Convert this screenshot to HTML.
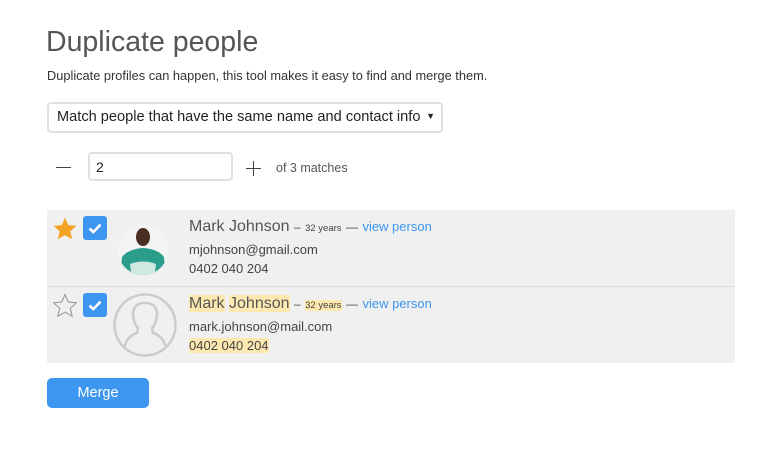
<!DOCTYPE html>
<html><head><meta charset="utf-8"><style>
*{margin:0;padding:0;box-sizing:border-box}
body{width:781px;height:457px;background:#fff;font-family:"Liberation Sans",sans-serif;color:#444;position:relative;overflow:hidden}
.a{position:absolute;white-space:nowrap}
.hl{background:#fde9b0}
.row{position:absolute;left:47px;width:688px;background:#f0f0f0}
.cb{position:absolute;width:24px;height:24px;border-radius:3px;background:#3d96f0}
.name{font-size:16px;color:#555}
.sm{font-size:9.5px;color:#444}
.link{color:#3d96f0;font-size:13px}
.t{font-size:13px;color:#444}
</style></head><body>
<div class="a" style="left:46px;top:26px;font-size:28.5px;color:#555">Duplicate people</div>
<div class="a" style="left:47px;top:68px;font-size:12.8px;color:#333">Duplicate profiles can happen, this tool makes it easy to find and merge them.</div>
<div class="a" style="left:47px;top:102px;width:396px;height:31px;border:2px solid #e0e0e0;border-radius:4px;font-size:14.6px;color:#222;padding:5px 0 0 8px">Match people that have the same name and contact info<span style="position:absolute;right:6px;top:7px;font-size:9px">▼</span></div>
<div class="a" style="left:56px;top:167px;width:15px;height:1px;background:#444"></div>
<div class="a" style="left:88px;top:152px;width:145px;height:29px;border:2px solid #e0e0e0;border-radius:4px;font-size:14px;color:#222;padding:5px 0 0 6px">2</div>
<div class="a" style="left:246px;top:168px;width:15px;height:1px;background:#444"></div>
<div class="a" style="left:253px;top:161px;width:1px;height:15px;background:#444"></div>
<div class="a" style="left:276px;top:161px;font-size:12.5px;color:#555">of 3 matches</div>

<div class="row" style="top:210px;height:76px"></div>
<div class="a" style="left:47px;top:286px;width:688px;height:1px;background:#ddd"></div>
<div class="row" style="top:287px;height:76px"></div>

<svg class="a" style="left:52px;top:216px" width="26" height="26" viewBox="0 0 24 24"><path d="M12 1.5l3.1 6.9 7.4.7-5.6 5 1.7 7.4L12 17.6l-6.6 3.9 1.7-7.4-5.6-5 7.4-.7z" fill="#f4a425"/></svg>
<svg class="a" style="left:52px;top:293px" width="26" height="26" viewBox="0 0 24 24"><path d="M12 1.5l3.1 6.9 7.4.7-5.6 5 1.7 7.4L12 17.6l-6.6 3.9 1.7-7.4-5.6-5 7.4-.7z" fill="none" stroke="#999" stroke-width="1"/></svg>
<div class="cb" style="left:83px;top:216px"><svg width="24" height="24"><path d="M6.5 12.5l3.8 3.6 7.2-7.4" fill="none" stroke="#fff" stroke-width="2.6"/></svg></div>
<div class="cb" style="left:83px;top:293px"><svg width="24" height="24"><path d="M6.5 12.5l3.8 3.6 7.2-7.4" fill="none" stroke="#fff" stroke-width="2.6"/></svg></div>

<svg class="a" style="left:118px;top:219px" width="50" height="62" viewBox="0 0 50 62"><defs><clipPath id="c"><circle cx="25" cy="31" r="25"/></clipPath></defs><g clip-path="url(#c)"><rect width="50" height="62" fill="#f4f4f4"/><path d="M2 62 L4 38 Q10 30 25 29 Q40 30 46 38 L48 62Z" fill="#2a9e8a"/><path d="M12 45 Q25 40 38 45 L36 62 L14 62Z" fill="#cfe9e2"/><ellipse cx="25" cy="18" rx="7" ry="9" fill="#4a2e22"/></g></svg>
<svg class="a" style="left:113px;top:293px" width="64" height="64" viewBox="0 0 64 64"><circle cx="32" cy="32" r="30.5" fill="none" stroke="#ccc" stroke-width="2.5"/><path d="M12 53 Q14 43 24 40 L25 35 Q20 30 20 20 Q21 10 32 10 Q43 10 44 20 Q44 30 39 35 L40 40 Q50 43 52 53" fill="none" stroke="#ccc" stroke-width="2.5"/></svg>

<div class="a" style="left:189px;top:218px"><span class="name">Mark Johnson</span> <span style="font-size:12px">–</span> <span class="sm">32 years</span> <span style="font-size:12px">—</span> <span class="link">view person</span></div>
<div class="a t" style="left:189px;top:242px">mjohnson@gmail.com</div>
<div class="a t" style="left:189px;top:261px">0402 040 204</div>

<div class="a" style="left:189px;top:295px"><span class="name hl">Mark</span> <span class="name hl">Johnson</span> <span style="font-size:12px">–</span> <span class="sm hl">32 years</span> <span style="font-size:12px">—</span> <span class="link">view person</span></div>
<div class="a t" style="left:189px;top:319px">mark.johnson@mail.com</div>
<div class="a t hl" style="left:189px;top:338px">0402 040 204</div>

<div class="a" style="left:47px;top:378px;width:102px;height:30px;background:#3d96f0;border-radius:5px;color:#fff;font-size:14.5px;text-align:center;line-height:30px">Merge</div>
</body></html>
